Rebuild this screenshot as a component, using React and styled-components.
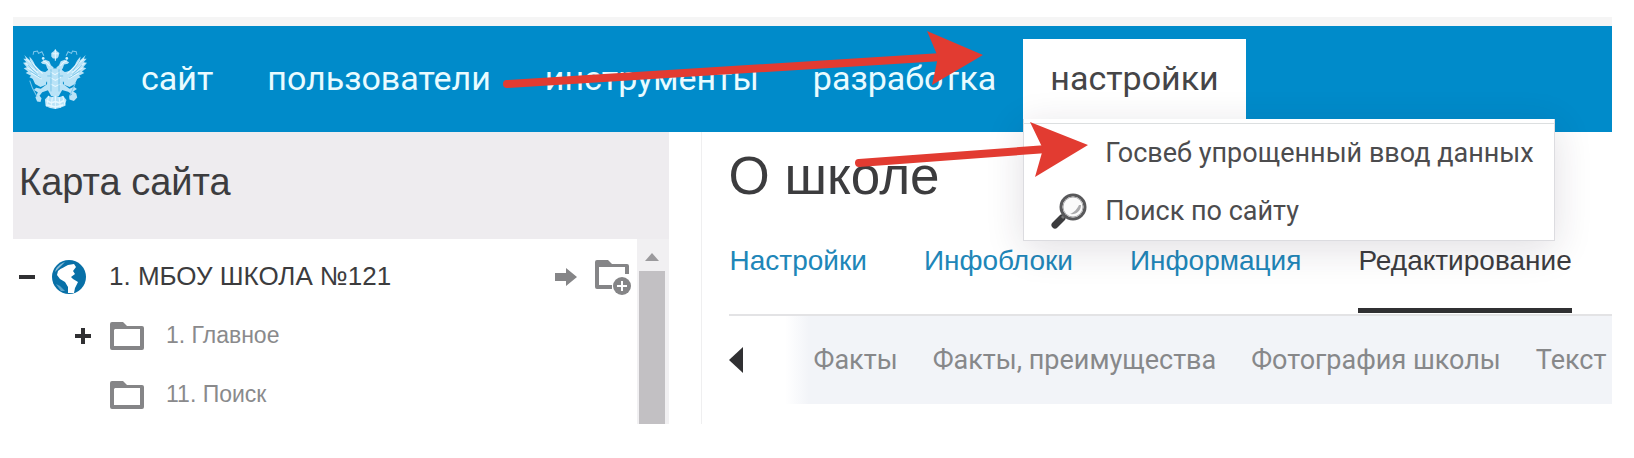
import React, { useState } from 'react';
import styled, { createGlobalStyle } from 'styled-components';

const GlobalStyle = createGlobalStyle`
    * {
        box-sizing: border-box;
    }
    body {
        margin: 0;
        background: #fff;
        font-family: Roboto, "Liberation Sans", sans-serif;
        color: #3c3c3e;
    }
    button {
        border: 0;
        padding: 0;
        background: none;
        font: inherit;
        color: inherit;
        cursor: pointer;
    }
    a {
        color: inherit;
        text-decoration: none;
    }
    svg {
        display: block;
        flex-shrink: 0;
    }
`

const Page = styled.div`
    position: relative;
    padding: 17px 22px 34px 13px;
    overflow: hidden;
`

const TopStrip = styled.div`
    height: 9px;
    background: #f5f5f5;
`

const Header = styled.header`
    display: flex;
    align-items: flex-start;
    padding: 13px 0 13px 10px;
    background: #008bca;
`

const Logo = styled.a`
    display: flex;
    align-items: center;
    height: 80px;
    margin-right: 27px;
`

const Nav = styled.nav`
    display: flex;
`

const NavItem = styled.div`
    position: relative;
`

const NavButton = styled.button`
    height: 80px;
    padding: 0 27px 2px;
    font-size: 34px;
    line-height: 40px;
    white-space: nowrap;
    color: ${props => props.$open ? "#454547" : "#e9fbff"};
    background: ${props => props.$open ? "#fff" : "transparent"};
`

const Menu = styled.ul`
    position: absolute;
    top: 100%;
    left: 0;
    z-index: 2;
    margin: 0;
    padding: 4px 0 0;
    list-style: none;
    background: #fff;
    border: 1px solid #dcdce0;
    border-top: 0;
    box-shadow: 0 8px 36px rgba(40, 30, 60, 0.14);
`

const MenuItem = styled.li`
    &:first-child {
        border-top: 1px solid #dcdfe0;
    }
`

const MenuLink = styled.a`
    display: grid;
    grid-template-columns: 36px auto;
    column-gap: 18px;
    align-items: center;
    height: 58px;
    padding: 0 20px 0 27px;
    font-size: 27px;
    line-height: 32px;
    white-space: nowrap;
    color: #4c4c4e;
`

const Body = styled.div`
    display: flex;
    height: 292px;
`

const Sidebar = styled.aside`
    flex: 0 0 41%;
    display: flex;
    flex-direction: column;
`

const SidebarTitle = styled.h2`
    margin: 0;
    padding: 30px 6px 37px;
    background: #eeecef;
    font-family: "Liberation Sans", Arial, sans-serif;
    font-size: 38px;
    font-weight: 400;
    line-height: 40px;
`

const TreeWrap = styled.div`
    flex: 1;
    display: flex;
    overflow: hidden;
`

const Tree = styled.ul`
    flex: 1;
    margin: 0;
    padding: 8px 0 0;
    list-style: none;
    font-family: "Liberation Sans", Arial, sans-serif;
`

const TreeRow = styled.li`
    display: flex;
    align-items: center;
    gap: ${props => props.$root ? "16px" : "18px"};
    height: 59px;
    padding: 0 6px 0 ${props => props.$root ? "6px" : "62px"};
    font-size: ${props => props.$root ? "26px" : "23px"};
    color: ${props => props.$root ? "#3c3c3e" : "#8a8a8c"};
`

const Toggle = styled.button`
    width: 16px;
    height: 16px;
`

const TreeLink = styled.a`
    flex: 1;
    padding-left: ${props => props.$root ? "6px" : "3px"};
    white-space: nowrap;
`

const Scroll = styled.div`
    width: 32px;
    padding: 0 4px 0 2px;
    display: flex;
    flex-direction: column;
    background: #f1f0f2;
`

const ScrollUp = styled.button`
    display: flex;
    align-items: center;
    justify-content: center;
    height: 32px;
    padding-top: 3px;
`

const Thumb = styled.div`
    flex: 1;
    background: #c2c0c3;
`

const Main = styled.main`
    flex: 1;
    min-width: 0;
    margin-left: 32px;
    padding-left: 27px;
    border-left: 1px solid #efeff0;
`

const Title = styled.h1`
    margin: 0;
    padding: 14px 0 0;
    font-family: "Liberation Sans", Arial, sans-serif;
    font-size: 53px;
    font-weight: 400;
    line-height: 60px;
`

const Tabs = styled.nav`
    display: flex;
    gap: 57px;
    margin-top: 37px;
    border-bottom: 2px solid #e3e3e5;
    padding: 0 0 1px 1px;
    font-family: "Liberation Sans", Arial, sans-serif;
    font-size: 28px;
    line-height: 32px;
    white-space: nowrap;
`

const Tab = styled.a`
    padding: 2px 0 31px;
    color: ${props => props.$active ? "#3c3c3e" : "#2086b8"};
    border-bottom: 5px solid ${props => props.$active ? "#303032" : "transparent"};
`

const SubRow = styled.div`
    display: flex;
    height: 88px;
`

const Back = styled.button`
    width: 56px;
`

const SubTabs = styled.nav`
    flex: 1;
    display: flex;
    align-items: center;
    gap: 35px;
    padding-left: 29px;
    overflow: hidden;
    background: linear-gradient(90deg, #fff, #f2f4f8 24px);
    font-size: 27px;
    line-height: 32px;
    white-space: nowrap;
    color: #87888a;
`

const Marks = styled.svg`
    position: absolute;
    top: 0;
    left: 0;
    z-index: 3;
    pointer-events: none;
`

const Eagle = () => (
    <svg width="64" height="60" viewBox="0 0 190 178" fill="none">
        <g fill="#b9e3f7">
            <path d="M4 18C10 24 14 29 21 33L19 22C27 29 32 38 36 48C43 59 52 67 66 68L77 61L80 94L64 99L49 92L35 91L19 84L24 79L8 71L15 67L2 57L11 54L0 41L10 39L1 29L9 29Z" />
            <path d="M186 18C180 24 176 29 169 33L171 22C163 29 158 38 154 48C147 59 138 67 124 68L113 61L110 94L126 99L141 92L155 91L171 84L166 79L182 71L175 67L188 57L179 54L190 41L180 39L189 29L181 29Z" />
            <path d="M24 78L49 90L70 92L68 106L52 113L36 104Z" />
            <path d="M166 78L141 90L120 92L122 106L138 113L154 104Z" />
            <path d="M76 53C83 59 107 59 114 53L119 76L118 119L106 140L84 140L72 119L71 77Z" />
            <path d="M53 39L66 32L78 36L83 48L91 55L84 67L72 58L68 46L57 44Z" />
            <path d="M137 39L124 32L112 36L107 48L99 55L106 67L118 58L122 46L133 44Z" />
            <path d="M84 12L92 6L96 0L100 6L108 12L105 24L101 28L89 28L84 22Z" />
            <path d="M65 150L75 139L86 143L96 137L107 143L119 139L129 151L124 169L109 175L96 178L80 175L67 169Z" />
            <path d="M76 101L53 118L39 115L32 122L44 128L37 144L42 156L52 157L55 146L49 139L57 128L78 121Z" />
            <path d="M115 101L138 118L151 112L160 119L149 126L158 132L161 144L151 154L138 150L137 140L145 134L134 127L113 121Z" />
        </g>
        <g stroke="#e7f8ff" strokeWidth="3">
            <path d="M9 29L42 57M7 42L45 70M13 55L49 81M24 71L55 89M23 37L58 73M181 29L148 57M183 42L145 70M177 55L141 81M166 71L135 89M167 37L132 73" />
            <path d="M59 35L70 40L79 50M131 35L120 40L111 50M96 2V35M88 14H104M76 139L70 170M87 143L83 174M96 139V178M107 143L111 174M118 140L125 168" />
            <path d="M80 67L95 76L111 67M80 84L96 93L113 84M82 104L96 111L111 104" />
            <path d="M70 153L84 160L96 156L108 160L122 153M72 166L96 172L120 166" strokeWidth="5" />
        </g>
        <g stroke="#80c9ed" strokeWidth="3">
            <path d="M30 17L32 8L43 6L46 13L56 8L62 20M160 17L158 8L147 6L144 13L134 8L128 20" />
            <path d="M20 94L28 116L42 142M156 100L138 140" />
        </g>
        <g stroke="#5bb8e2" strokeWidth="2">
            <path d="M20 34L42 65M15 47L43 77M20 64L53 86M170 34L148 65M175 47L147 77M170 64L137 86M83 60V126M107 60V126M72 80H81M110 80H119" />
        </g>
        <circle cx="60" cy="28" r="4" fill="#d3f1fd" />
        <circle cx="130" cy="28" r="4" fill="#d3f1fd" />
    </svg>
)

const Magnifier = () => (
    <svg width="36" height="36" viewBox="0 0 36 36" fill="none">
        <path d="M11 25L4 32" stroke="#3c3c3e" strokeWidth="7" strokeLinecap="round" />
        <path d="M15 21L11 25" stroke="#777" strokeWidth="3" />
        <circle cx="22" cy="14" r="12" fill="#fafafa" stroke="#58585a" strokeWidth="3" />
        <circle cx="22" cy="14" r="10" stroke="#a9a9ab" strokeWidth="1" />
        <path d="M30 12C30 18 25 22 19 21C24 19 26 16 28 12Z" fill="#aaaaac" />
    </svg>
)

const Globe = () => (
    <svg width="36" height="36" viewBox="0 0 36 36">
        <circle cx="18" cy="18" r="17" fill="#0870a7" />
        <path d="M7 12C10 9 14 8 17 6L23 5L25 8L22 12L24 15L20 18L22 20L27 23L24 29L23 34L17 34L17 28L14 23L9 20L6 16Z" fill="#fff" />
        <path d="M4 13C5 8 9 5 14 3L10 7L7 10Z" fill="#8ebdd6" />
        <path d="M5 25L9 27L14 32L10 32Z" fill="#5ba3c9" />
    </svg>
)

const Folder = ({ add }) => (
    <svg width={add ? 37 : 36} height={add ? 36 : 30} viewBox={add ? "0 0 37 36" : "0 0 36 30"}>
        {add ? (
            <>
                <path d="M1 3Q1 1 3 1H14L18 5H33Q35 5 35 7V15H31V8H5V26H18V30H3Q1 30 1 28Z" fill="#858587" />
                <circle cx="28" cy="27" r="9" fill="#858587" />
                <path d="M28 22V32M23 27H33" stroke="#fff" strokeWidth="2" />
            </>
        ) : (
            <path fillRule="evenodd" d="M1 3Q1 1 3 1H14L18 5H33Q35 5 35 7V27Q35 29 33 29H3Q1 29 1 27ZM5 9V25H31V8H6Z" fill="#858587" />
        )}
    </svg>
)

const RightArrow = () => (
    <svg width="24" height="18" viewBox="0 0 24 18">
        <path d="M1 5H12V0L23 9L12 18V13H1Z" fill="#858587" />
    </svg>
)

const Sign = ({ plus }) => (
    <svg width="16" height="16" viewBox="0 0 16 16">
        <path d={plus ? "M0 8H16M8 0V16" : "M0 8H16"} stroke="#303032" strokeWidth="4" />
    </svg>
)

const Arrows = () => (
    <Marks width="1634" height="458" viewBox="0 0 1634 458" aria-hidden="true">
        <g stroke="#e23b31" strokeWidth="8" strokeLinecap="round">
            <path d="M507 84L942 57" />
            <path d="M859 163L1047 149" />
        </g>
        <g fill="#e23b31">
            <path d="M927 31L983 55L932 85L938 57Z" />
            <path d="M1030 122L1088 145L1035 177L1043 149Z" />
        </g>
    </Marks>
)

const navItems = ["сайт", "пользователи", "инструменты", "разработка", "настройки"]
const tabs = ["Настройки", "Инфоблоки", "Информация", "Редактирование"]
const subTabs = ["Факты", "Факты, преимущества", "Фотография школы", "Текст"]

const App = () => {
    const [open, setOpen] = useState("настройки")
    const [tab, setTab] = useState("Редактирование")

    return (
        <>
            <GlobalStyle />
            <Page>
                <TopStrip />
                <Header>
                    <Logo href="#" aria-label="Главная"><Eagle /></Logo>
                    <Nav>
                        {navItems.map(name => (
                            <NavItem key={name}>
                                <NavButton $open={open === name} onClick={() => setOpen(name)}>{name}</NavButton>
                                {name === "настройки" && open === name &&
                                    <Menu>
                                        <MenuItem>
                                            <MenuLink href="#"><span />Госвеб упрощенный ввод данных</MenuLink>
                                        </MenuItem>
                                        <MenuItem>
                                            <MenuLink href="#"><Magnifier />Поиск по сайту</MenuLink>
                                        </MenuItem>
                                    </Menu>
                                }
                            </NavItem>
                        ))}
                    </Nav>
                </Header>
                <Body>
                    <Sidebar>
                        <SidebarTitle>Карта сайта</SidebarTitle>
                        <TreeWrap>
                            <Tree>
                                <TreeRow $root>
                                    <Toggle aria-label="Свернуть"><Sign /></Toggle>
                                    <Globe />
                                    <TreeLink $root href="#">1. МБОУ ШКОЛА №121</TreeLink>
                                    <button aria-label="Перейти"><RightArrow /></button>
                                    <button aria-label="Добавить раздел"><Folder add /></button>
                                </TreeRow>
                                <TreeRow>
                                    <Toggle aria-label="Развернуть"><Sign plus /></Toggle>
                                    <Folder />
                                    <TreeLink href="#">1. Главное</TreeLink>
                                </TreeRow>
                                <TreeRow>
                                    <Toggle as="span" />
                                    <Folder />
                                    <TreeLink href="#">11. Поиск</TreeLink>
                                </TreeRow>
                            </Tree>
                            <Scroll>
                                <ScrollUp aria-label="Вверх">
                                    <svg width="14" height="8" viewBox="0 0 14 8"><path d="M0 8L7 0L14 8Z" fill="#9b9a9d" /></svg>
                                </ScrollUp>
                                <Thumb />
                            </Scroll>
                        </TreeWrap>
                    </Sidebar>
                    <Main>
                        <Title>О школе</Title>
                        <Tabs>
                            {tabs.map(name => (
                                <Tab key={name} href="#" $active={tab === name} onClick={() => setTab(name)}>{name}</Tab>
                            ))}
                        </Tabs>
                        <SubRow>
                            <Back aria-label="Назад">
                                <svg width="14" height="26" viewBox="0 0 14 26"><path d="M14 0V26L0 13Z" fill="#303032" /></svg>
                            </Back>
                            <SubTabs>
                                {subTabs.map(name => <a key={name} href="#">{name}</a>)}
                            </SubTabs>
                        </SubRow>
                    </Main>
                </Body>
                <Arrows />
            </Page>
        </>
    )
}

export default App;
